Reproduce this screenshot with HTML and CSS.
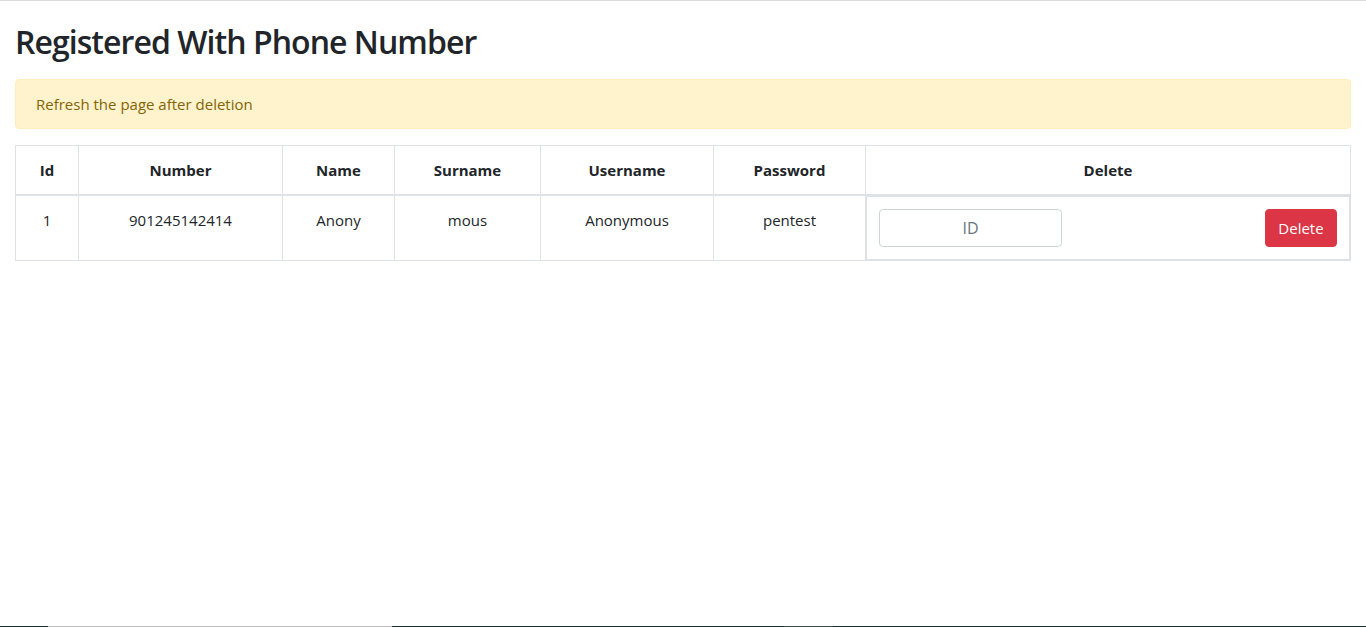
FILE: index.html
```html
<!DOCTYPE html>
<html lang="en">
<head>
<meta charset="utf-8">
<title>Registered With Phone Number</title>
<link rel="stylesheet" href="styles.css">
</head>
<body>
<div class="container">
  <h2 class="title">Registered With Phone Number</h2>
  <div class="alert">Refresh the page after deletion</div>
  <table class="grid">
    <colgroup>
      <col class="c-id"><col class="c-num"><col class="c-name"><col class="c-sur"><col class="c-user"><col class="c-pass"><col class="c-del">
    </colgroup>
    <thead>
      <tr><th>Id</th><th>Number</th><th>Name</th><th>Surname</th><th>Username</th><th>Password</th><th>Delete</th></tr>
    </thead>
    <tbody>
      <tr>
        <td>1</td><td>901245142414</td><td>Anony</td><td>mous</td><td>Anonymous</td><td>pentest</td>
        <td class="del-cell">
          <form class="del-form">
            <input class="id-input" type="text" placeholder="ID">
            <button class="btn-danger" type="button">Delete</button>
          </form>
        </td>
      </tr>
    </tbody>
  </table>
</div>
<div class="bottom-strip"></div>
</body>
</html>
```
FILE: styles.css
```css
html, body { margin: 0; padding: 0; }
body {
  font-family: "Open Sans", "Noto Sans", "Liberation Sans", sans-serif;
  font-size: 15px;
  line-height: 24px;
  color: #212529;
  background: #fff;
  border-top: 1px solid #dcdcdc;
}
.container { padding: 0 15px; }
.title {
  font-size: 32px;
  font-weight: 600;
  line-height: 38px;
  margin: 22px 0 18px;
  letter-spacing: -0.95px;
}
.alert {
  background: #fff3cd;
  border: 1px solid #ffeeba;
  color: #856404;
  border-radius: 4px;
  padding: 12px 20px;
  margin-bottom: 16px;
}
.grid {
  width: 1335px;
  border-collapse: collapse;
  table-layout: fixed;
}
.c-id { width: 63px; }
.c-num { width: 204px; }
.c-name { width: 112px; }
.c-sur { width: 146px; }
.c-user { width: 173px; }
.c-pass { width: 152px; }
.c-del { width: 485px; }
.grid th, .grid td {
  border: 1px solid #dee2e6;
  padding: 12px;
  text-align: center;
  vertical-align: top;
}
.grid th { font-weight: 700; border-bottom-width: 2px; }
.grid td.del-cell { padding: 0; }
.del-form {
  display: flex;
  justify-content: space-between;
  align-items: center;
  border: 1px solid #dee2e6;
  padding: 12px;
  margin: 0;
}
.id-input {
  width: 183px;
  height: 38px;
  box-sizing: border-box;
  border: 1px solid #ced4da;
  border-radius: 4px;
  padding: 6px 12px;
  font: inherit;
  font-size: 16px;
  text-align: center;
  color: #495057;
}
.id-input::placeholder { color: #6c757d; }
.btn-danger {
  height: 38px;
  width: 72px;
  box-sizing: border-box;
  background: #dc3545;
  border: 1px solid #dc3545;
  color: #fff;
  border-radius: 4px;
  font: inherit;
  padding: 6px 0;
}
.bottom-strip {
  position: fixed;
  left: 0; right: 0; bottom: 0;
  height: 1px;
  background: linear-gradient(to right, #1d3035 0 48px, #bdbdbd 48px 392px, #1d3035 392px 784px, #3a4a4f 784px 833px, #1d3035 833px);
}
```
